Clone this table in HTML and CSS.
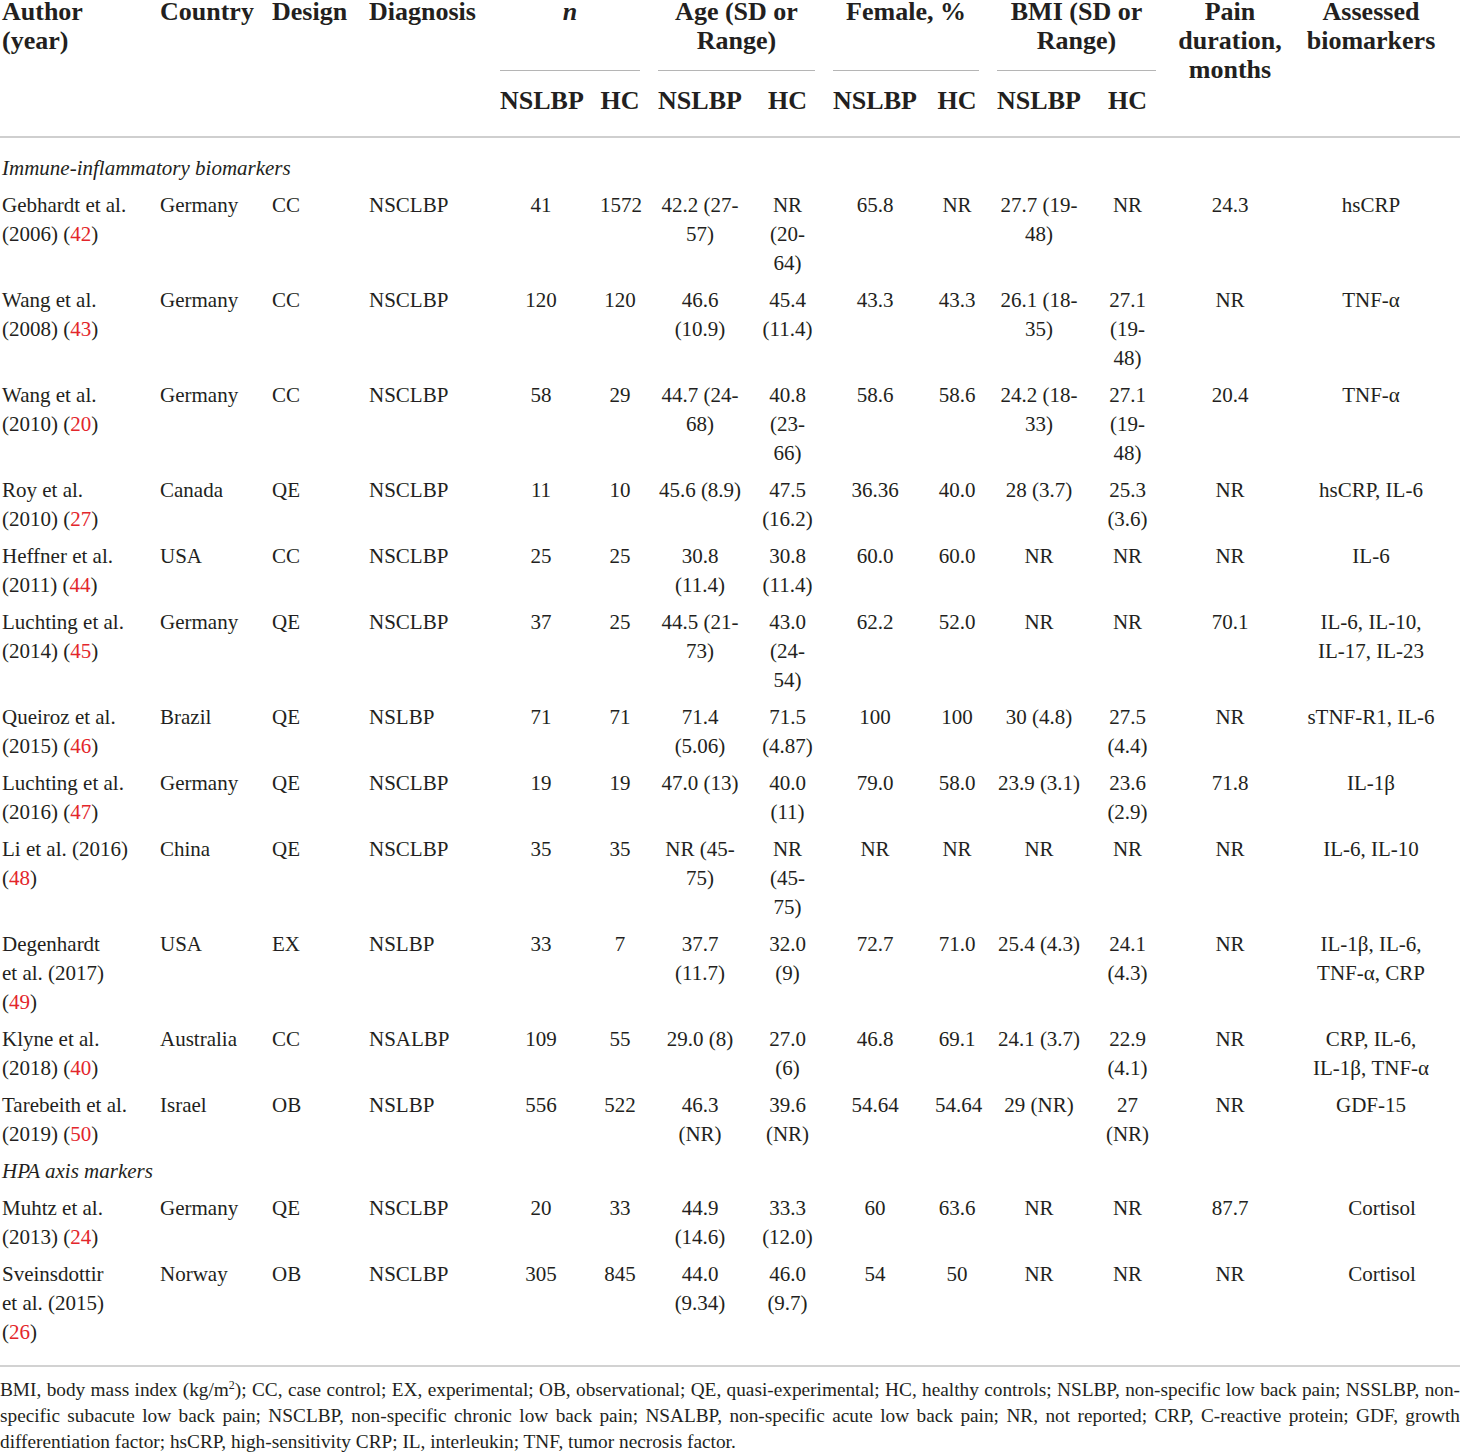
FILE: index.html
```html
<!DOCTYPE html>
<html lang="en">
<head>
<meta charset="utf-8">
<title>Table</title>
<link rel="stylesheet" href="styles.css">
</head>
<body>
<div class="wrap">
<table class="tbl">
<colgroup>
<col class="w-author"><col class="w-country"><col class="w-design"><col class="w-diag">
<col class="w-nn"><col class="w-nh"><col class="w-an"><col class="w-ah">
<col class="w-fn"><col class="w-fh"><col class="w-bn"><col class="w-bh">
<col class="w-pain"><col class="w-bio">
</colgroup>
<thead>
<tr class="h1">
<th rowspan="2" class="l first">Author (year)</th>
<th rowspan="2" class="l">Country</th>
<th rowspan="2" class="l">Design</th>
<th rowspan="2" class="l">Diagnosis</th>
<th colspan="2" class="grp"><div class="grp-in"><em>n</em></div></th>
<th colspan="2" class="grp"><div class="grp-in">Age (SD or Range)</div></th>
<th colspan="2" class="grp"><div class="grp-in">Female, %</div></th>
<th colspan="2" class="grp"><div class="grp-in">BMI (SD or Range)</div></th>
<th rowspan="2" class="c">Pain duration, months</th>
<th rowspan="2" class="c last">Assessed biomarkers</th>
</tr>
<tr class="h2">
<th>NSLBP</th><th>HC</th><th>NSLBP</th><th>HC</th><th>NSLBP</th><th>HC</th><th>NSLBP</th><th>HC</th>
</tr>
</thead>
<tbody>
<tr class="sec top"><td colspan="14" class="first">Immune-inflammatory biomarkers</td></tr>
<tr>
<td class="first">Gebhardt et&nbsp;al. (2006) (<span class="ref">42</span>)</td><td>Germany</td><td>CC</td><td>NSCLBP</td>
<td class="c">41</td><td class="c">1572</td><td class="c">42.2 (27-<wbr>57)</td><td class="c">NR (20-<wbr>64)</td>
<td class="c">65.8</td><td class="c">NR</td><td class="c">27.7 (19-<wbr>48)</td><td class="c">NR</td>
<td class="c">24.3</td><td class="c last">hsCRP</td>
</tr>
<tr>
<td class="first">Wang et&nbsp;al. (2008) (<span class="ref">43</span>)</td><td>Germany</td><td>CC</td><td>NSCLBP</td>
<td class="c">120</td><td class="c">120</td><td class="c">46.6 (10.9)</td><td class="c">45.4 (11.4)</td>
<td class="c">43.3</td><td class="c">43.3</td><td class="c">26.1 (18-<wbr>35)</td><td class="c">27.1 (19-<wbr>48)</td>
<td class="c">NR</td><td class="c last">TNF-α</td>
</tr>
<tr>
<td class="first">Wang et&nbsp;al. (2010) (<span class="ref">20</span>)</td><td>Germany</td><td>CC</td><td>NSCLBP</td>
<td class="c">58</td><td class="c">29</td><td class="c">44.7 (24-<wbr>68)</td><td class="c">40.8 (23-<wbr>66)</td>
<td class="c">58.6</td><td class="c">58.6</td><td class="c">24.2 (18-<wbr>33)</td><td class="c">27.1 (19-<wbr>48)</td>
<td class="c">20.4</td><td class="c last">TNF-α</td>
</tr>
<tr>
<td class="first">Roy et&nbsp;al. (2010) (<span class="ref">27</span>)</td><td>Canada</td><td>QE</td><td>NSCLBP</td>
<td class="c">11</td><td class="c">10</td><td class="c">45.6 (8.9)</td><td class="c">47.5 (16.2)</td>
<td class="c">36.36</td><td class="c">40.0</td><td class="c">28 (3.7)</td><td class="c">25.3 (3.6)</td>
<td class="c">NR</td><td class="c last"><span class="nw">hsCRP,</span> <span class="nw">IL-6</span></td>
</tr>
<tr>
<td class="first">Heffner et&nbsp;al. (2011) (<span class="ref">44</span>)</td><td>USA</td><td>CC</td><td>NSCLBP</td>
<td class="c">25</td><td class="c">25</td><td class="c">30.8 (11.4)</td><td class="c">30.8 (11.4)</td>
<td class="c">60.0</td><td class="c">60.0</td><td class="c">NR</td><td class="c">NR</td>
<td class="c">NR</td><td class="c last">IL-6</td>
</tr>
<tr>
<td class="first">Luchting et&nbsp;al. (2014) (<span class="ref">45</span>)</td><td>Germany</td><td>QE</td><td>NSCLBP</td>
<td class="c">37</td><td class="c">25</td><td class="c">44.5 (21-<wbr>73)</td><td class="c">43.0 (24-<wbr>54)</td>
<td class="c">62.2</td><td class="c">52.0</td><td class="c">NR</td><td class="c">NR</td>
<td class="c">70.1</td><td class="c last"><span class="nw">IL-6,</span> <span class="nw">IL-10,</span> <span class="nw">IL-17,</span> <span class="nw">IL-23</span></td>
</tr>
<tr>
<td class="first">Queiroz et&nbsp;al. (2015) (<span class="ref">46</span>)</td><td>Brazil</td><td>QE</td><td>NSLBP</td>
<td class="c">71</td><td class="c">71</td><td class="c">71.4 (5.06)</td><td class="c">71.5 (4.87)</td>
<td class="c">100</td><td class="c">100</td><td class="c">30 (4.8)</td><td class="c">27.5 (4.4)</td>
<td class="c">NR</td><td class="c last"><span class="nw">sTNF-R1,</span> <span class="nw">IL-6</span></td>
</tr>
<tr>
<td class="first">Luchting et&nbsp;al. (2016) (<span class="ref">47</span>)</td><td>Germany</td><td>QE</td><td>NSCLBP</td>
<td class="c">19</td><td class="c">19</td><td class="c">47.0 (13)</td><td class="c">40.0 (11)</td>
<td class="c">79.0</td><td class="c">58.0</td><td class="c">23.9 (3.1)</td><td class="c">23.6 (2.9)</td>
<td class="c">71.8</td><td class="c last">IL-1β</td>
</tr>
<tr>
<td class="first">Li et&nbsp;al. (2016) (<span class="ref">48</span>)</td><td>China</td><td>QE</td><td>NSCLBP</td>
<td class="c">35</td><td class="c">35</td><td class="c">NR (45-<wbr>75)</td><td class="c">NR (45-<wbr>75)</td>
<td class="c">NR</td><td class="c">NR</td><td class="c">NR</td><td class="c">NR</td>
<td class="c">NR</td><td class="c last"><span class="nw">IL-6,</span> <span class="nw">IL-10</span></td>
</tr>
<tr>
<td class="first">Degenhardt et&nbsp;al. (2017) (<span class="ref">49</span>)</td><td>USA</td><td>EX</td><td>NSLBP</td>
<td class="c">33</td><td class="c">7</td><td class="c">37.7 (11.7)</td><td class="c">32.0 (9)</td>
<td class="c">72.7</td><td class="c">71.0</td><td class="c">25.4 (4.3)</td><td class="c">24.1 (4.3)</td>
<td class="c">NR</td><td class="c last"><span class="nw">IL-1β,</span> <span class="nw">IL-6,</span> <span class="nw">TNF-α,</span> <span class="nw">CRP</span></td>
</tr>
<tr>
<td class="first">Klyne et&nbsp;al. (2018) (<span class="ref">40</span>)</td><td>Australia</td><td>CC</td><td>NSALBP</td>
<td class="c">109</td><td class="c">55</td><td class="c">29.0 (8)</td><td class="c">27.0 (6)</td>
<td class="c">46.8</td><td class="c">69.1</td><td class="c">24.1 (3.7)</td><td class="c">22.9 (4.1)</td>
<td class="c">NR</td><td class="c last"><span class="nw">CRP,</span> <span class="nw">IL-6,</span> <span class="nw">IL-1β,</span> <span class="nw">TNF-α</span></td>
</tr>
<tr>
<td class="first">Tarebeith et&nbsp;al. (2019) (<span class="ref">50</span>)</td><td>Israel</td><td>OB</td><td>NSLBP</td>
<td class="c">556</td><td class="c">522</td><td class="c">46.3 (NR)</td><td class="c">39.6 (NR)</td>
<td class="c">54.64</td><td class="c">54.64</td><td class="c">29 (NR)</td><td class="c">27 (NR)</td>
<td class="c">NR</td><td class="c last">GDF-15</td>
</tr>
<tr class="sec"><td colspan="14" class="first">HPA axis markers</td></tr>
<tr>
<td class="first">Muhtz et&nbsp;al. (2013) (<span class="ref">24</span>)</td><td>Germany</td><td>QE</td><td>NSCLBP</td>
<td class="c">20</td><td class="c">33</td><td class="c">44.9 (14.6)</td><td class="c">33.3 (12.0)</td>
<td class="c">60</td><td class="c">63.6</td><td class="c">NR</td><td class="c">NR</td>
<td class="c">87.7</td><td class="c last cort">Cortisol</td>
</tr>
<tr>
<td class="first">Sveinsdottir et&nbsp;al. (2015) (<span class="ref">26</span>)</td><td>Norway</td><td>OB</td><td>NSCLBP</td>
<td class="c">305</td><td class="c">845</td><td class="c">44.0 (9.34)</td><td class="c">46.0 (9.7)</td>
<td class="c">54</td><td class="c">50</td><td class="c">NR</td><td class="c">NR</td>
<td class="c">NR</td><td class="c last cort">Cortisol</td>
</tr>
</tbody>
</table>
<p class="note">BMI, body mass index (kg/m<sup>2</sup>); CC, case control; EX, experimental; OB, observational; QE, quasi-experimental; HC, healthy controls; NSLBP, non-specific low back pain; NSSLBP, non-specific subacute low back pain; NSCLBP, non-specific chronic low back pain; NSALBP, non-specific acute low back pain; NR, not reported; CRP, C-reactive protein; GDF, growth differentiation factor; hsCRP, high-sensitivity CRP; IL, interleukin; TNF, tumor necrosis factor.</p>
</div>
</body>
</html>
```

FILE: styles.css
```css
html, body {
  margin: 0;
  padding: 0;
  background: #ffffff;
}
body {
  font-family: "Liberation Serif", "Times New Roman", serif;
  color: #231f20;
  width: 1460px;
  overflow: hidden;
}
.wrap {
  margin-top: -3px;
}
.tbl {
  width: 1460px;
  table-layout: fixed;
  border-collapse: separate;
  border-spacing: 0;
  font-size: 21px;
  line-height: 29px;
}
.w-author { width: 151px; }
.w-country { width: 112px; }
.w-design { width: 97px; }
.w-diag { width: 131px; }
.w-nn { width: 100px; }
.w-nh { width: 58px; }
.w-an { width: 102px; }
.w-ah { width: 73px; }
.w-fn { width: 102px; }
.w-fh { width: 62px; }
.w-bn { width: 102px; }
.w-bh { width: 75px; }
.w-pain { width: 130px; }
.w-bio { width: 165px; }

th, td {
  padding: 4px 9px;
  vertical-align: top;
  text-align: left;
}
th {
  font-size: 26px;
  font-weight: bold;
  line-height: 29px;
}
.first { padding-left: 2px; }
.last { padding-right: 22px; }
.c { text-align: center; }
.l { text-align: left; }
.nw { white-space: nowrap; }
.cort { padding-left: 18px; padding-right: 9px; }

.h1 th { padding-top: 0; padding-bottom: 0; }
.h1 th.grp { text-align: center; }
.grp-in {
  height: 58px;
  border-bottom: 1px solid #b5b5b5;
  padding-bottom: 15px;
}
.h2 th {
  text-align: center;
  padding-top: 15px;
  padding-bottom: 21px;
}
thead tr:last-child th,
thead th[rowspan] {
  border-bottom: 2px solid #cfcfcf;
}

.sec td {
  font-style: italic;
}
.sec.top td { padding-top: 16px; }

.ref { color: #e3262b; }

.note {
  margin: 14px 0 0 0;
  border-top: 2px solid #d2d2d2;
  padding-top: 10px;
  font-size: 19.3px;
  line-height: 26px;
  text-align: justify;
}
.note sup {
  font-size: 12px;
  line-height: 0;
  vertical-align: 7px;
}
```
